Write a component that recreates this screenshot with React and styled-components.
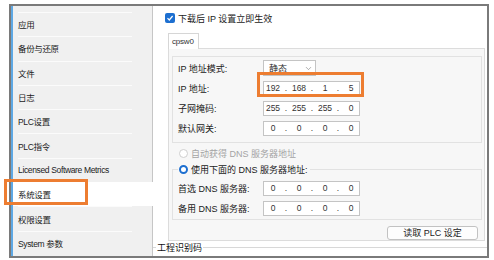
import React from 'react';
import styled, { createGlobalStyle, css } from 'styled-components';
import { ChevronDown } from 'lucide-react';

const NAV_ITEMS = [
  '应用',
  '备份与还原',
  '文件',
  '日志',
  'PLC设置',
  'PLC指令',
  'Licensed Software Metrics',
  '系统设置',
  '权限设置',
  'System 参数',
];

const IP_ROWS = [
  { label: 'IP 地址:', value: ['192', '168', '1', '5'] },
  { label: '子网掩码:', value: ['255', '255', '255', '0'] },
  { label: '默认网关:', value: ['0', '0', '0', '0'] },
];

const DNS_ROWS = [
  { label: '首选 DNS 服务器:', value: ['0', '0', '0', '0'] },
  { label: '备用 DNS 服务器:', value: ['0', '0', '0', '0'] },
];

const ORANGE = '#ed7d31';
const BLUE = '#1d6fd0';

const GlobalStyle = createGlobalStyle`
  body {
    margin: 0;
    background: #ffffff;
    font-family: "Liberation Sans", "Noto Sans CJK SC", sans-serif;
    font-size: 9px;
    color: #1f1f1f;
  }
`;

const IpField = ({ parts }) => (
  <IpBox>
    {parts.map((p, i) => (
      <React.Fragment key={i}>
        {i > 0 && <IpDot>.</IpDot>}
        <IpPart>{p}</IpPart>
      </React.Fragment>
    ))}
  </IpBox>
);

const App = () => {
  return (
    <>
      <GlobalStyle />
      <Frame>
        <Sidebar>
          {NAV_ITEMS.map((name) => (
            <NavItem key={name} $active={name === '系统设置'}>
              {name}
            </NavItem>
          ))}
        </Sidebar>
        <Main>
          <CheckRow>
            <CheckBox>
              <svg width="8" height="8" viewBox="0 0 8 8">
                <polyline
                  points="1.5,4.2 3.3,6 6.6,2"
                  fill="none"
                  stroke="#fff"
                  strokeWidth="1.2"
                />
              </svg>
            </CheckBox>
            下载后 IP 设置立即生效
          </CheckRow>
          <TabBar>
            <Tab>cpsw0</Tab>
          </TabBar>
          <TabPanel>
            <Group>
              <FieldRow>
                <Label>IP 地址模式:</Label>
                <Select>
                  静态
                  <ChevronDown size={9} strokeWidth={1.4} color="#666" />
                </Select>
              </FieldRow>
              {IP_ROWS.map((row) => (
                <FieldRow key={row.label}>
                  <Label>{row.label}</Label>
                  <IpField parts={row.value} />
                </FieldRow>
              ))}
            </Group>
            <RadioRow $disabled>
              <Radio $disabled />
              自动获得 DNS 服务器地址
            </RadioRow>
            <FieldGroup>
              <Legend>
                <Radio $checked />
                使用下面的 DNS 服务器地址:
              </Legend>
              {DNS_ROWS.map((row) => (
                <FieldRow key={row.label}>
                  <Label>{row.label}</Label>
                  <IpField parts={row.value} />
                </FieldRow>
              ))}
            </FieldGroup>
            <ButtonRow>
              <Button>读取 PLC 设定</Button>
            </ButtonRow>
          </TabPanel>
          <Footer>
            <FooterLegend>工程识别码</FooterLegend>
          </Footer>
        </Main>
        <Highlight $left={-7} $top={173} $width={84} $height={26} />
        <Highlight $left={246} $top={66} $width={107} $height={25} />
      </Frame>
    </>
  );
};

const Frame = styled.div`
  position: relative;
  display: flex;
  box-sizing: border-box;
  width: 480px;
  height: 254px;
  margin: 4px 0 0 9px;
  border: 2px solid #7a7a7a;
  background: #ffffff;
`;

const Sidebar = styled.nav`
  display: flex;
  flex-direction: column;
  width: 139px;
  flex-shrink: 0;
  padding-top: 6px;
  background: #f0f0f0;
  border-left: 2px solid #5ea8e4;
  border-right: 1px solid #c6c6c6;
`;

const NavItem = styled.div`
  position: relative;
  display: flex;
  align-items: center;
  height: 24.3px;
  padding-left: 5px;
  font-size: 8.5px;
  color: #222;
  white-space: nowrap;
  letter-spacing: -0.35px;

  &::before {
    content: '';
    position: absolute;
    top: 0;
    left: 5px;
    right: 20px;
    height: 1px;
    background: #fbfbfb;
  }

  ${({ $active }) =>
    $active &&
    css`
      background: #ffffff;
      margin-right: -1px;
      &::before {
        display: none;
      }
    `}
`;

const Main = styled.main`
  flex: 1;
  display: flex;
  flex-direction: column;
  padding: 6px 2px 0 15px;
  overflow: hidden;
`;

const CheckRow = styled.label`
  display: flex;
  align-items: center;
  gap: 3px;
  height: 12px;
  margin-left: -3px;
  font-size: 9px;
  color: #1a1a1a;
`;

const CheckBox = styled.span`
  display: flex;
  align-items: center;
  justify-content: center;
  width: 10px;
  height: 10px;
  border-radius: 2px;
  background: ${BLUE};
`;

const TabBar = styled.div`
  display: flex;
  margin-top: 9px;
`;

const Tab = styled.div`
  box-sizing: border-box;
  width: 31px;
  height: 16px;
  padding: 3px 0 0 3px;
  border: 1px solid #d6d6d6;
  border-bottom: none;
  background: #ffffff;
  font-size: 8px;
  letter-spacing: -0.2px;
  color: #333;
  margin-bottom: -1px;
  position: relative;
`;

const TabPanel = styled.section`
  box-sizing: border-box;
  height: 198px;
  padding: 7px 2px 0 3px;
  border: 1px solid #dcdcdc;
  background: #f7f7f7;
  display: flex;
  flex-direction: column;
`;

const Group = styled.div`
  display: flex;
  flex-direction: column;
  gap: 4px;
  padding: 3px 5px 6px;
  border: 1px solid #e2e2e2;
`;

const FieldRow = styled.div`
  display: flex;
  align-items: center;
  height: 16px;
`;

const Label = styled.span`
  width: 85px;
  font-size: 9px;
  color: #222;
`;

const Select = styled.div`
  box-sizing: border-box;
  display: flex;
  align-items: center;
  justify-content: space-between;
  width: 53px;
  height: 16px;
  padding: 0 2px 0 5px;
  border: 1px solid #c4c4c4;
  background: #fff;
  font-size: 9px;
`;

const IpBox = styled.div`
  box-sizing: border-box;
  display: grid;
  grid-template-columns: 18px 8px 18px 8px 18px 8px 18px;
  align-items: center;
  width: 97px;
  height: 15px;
  border: 1px solid #c4c4c4;
  background: #fff;
  font-size: 8.5px;
  color: #333;
`;

const IpPart = styled.span`
  text-align: center;
`;

const IpDot = styled.span`
  text-align: center;
`;

const RadioRow = styled.div`
  display: flex;
  align-items: center;
  gap: 3px;
  height: 12px;
  margin: 4px 0 0 7px;
  color: ${({ $disabled }) => ($disabled ? '#a4a4a4' : '#222')};
`;

const Radio = styled.span`
  box-sizing: border-box;
  width: 9px;
  height: 9px;
  border-radius: 50%;
  background: #fff;
  border: ${({ $checked, $disabled }) =>
    $checked ? `2.5px solid ${BLUE}` : `1px solid ${$disabled ? '#cfcfcf' : '#888'}`};
`;

const FieldGroup = styled.fieldset`
  display: flex;
  flex-direction: column;
  gap: 4px;
  margin: 4px 0 0;
  padding: 4px 5px 3px;
  border: 1px solid #e2e2e2;
  min-width: 0;
`;

const Legend = styled.legend`
  display: flex;
  align-items: center;
  gap: 3px;
  padding: 0 2px 0 1px;
  font-size: 9px;
  color: #1a1a1a;
`;

const ButtonRow = styled.div`
  display: flex;
  justify-content: flex-end;
  margin: 6px 4px 0 0;
`;

const Button = styled.button`
  width: 91px;
  height: 14px;
  padding: 0;
  border: 1px solid #c2c2c2;
  border-radius: 3px;
  background: #fdfdfd;
  font-family: inherit;
  font-size: 9px;
  color: #222;
  line-height: 1;
`;

const Footer = styled.fieldset`
  margin: 0 -2px 0 -15px;
  padding: 0 0 0 3px;
  border: none;
  border-top: 1px solid #d8d8d8;
  min-height: 20px;
`;

const FooterLegend = styled.legend`
  padding: 0 1px;
  font-size: 9px;
  color: #111;
`;

const Highlight = styled.div`
  position: absolute;
  left: ${({ $left }) => $left}px;
  top: ${({ $top }) => $top}px;
  width: ${({ $width }) => $width}px;
  height: ${({ $height }) => $height}px;
  box-sizing: border-box;
  border: 3px solid ${ORANGE};
  pointer-events: none;
`;

export default App;
